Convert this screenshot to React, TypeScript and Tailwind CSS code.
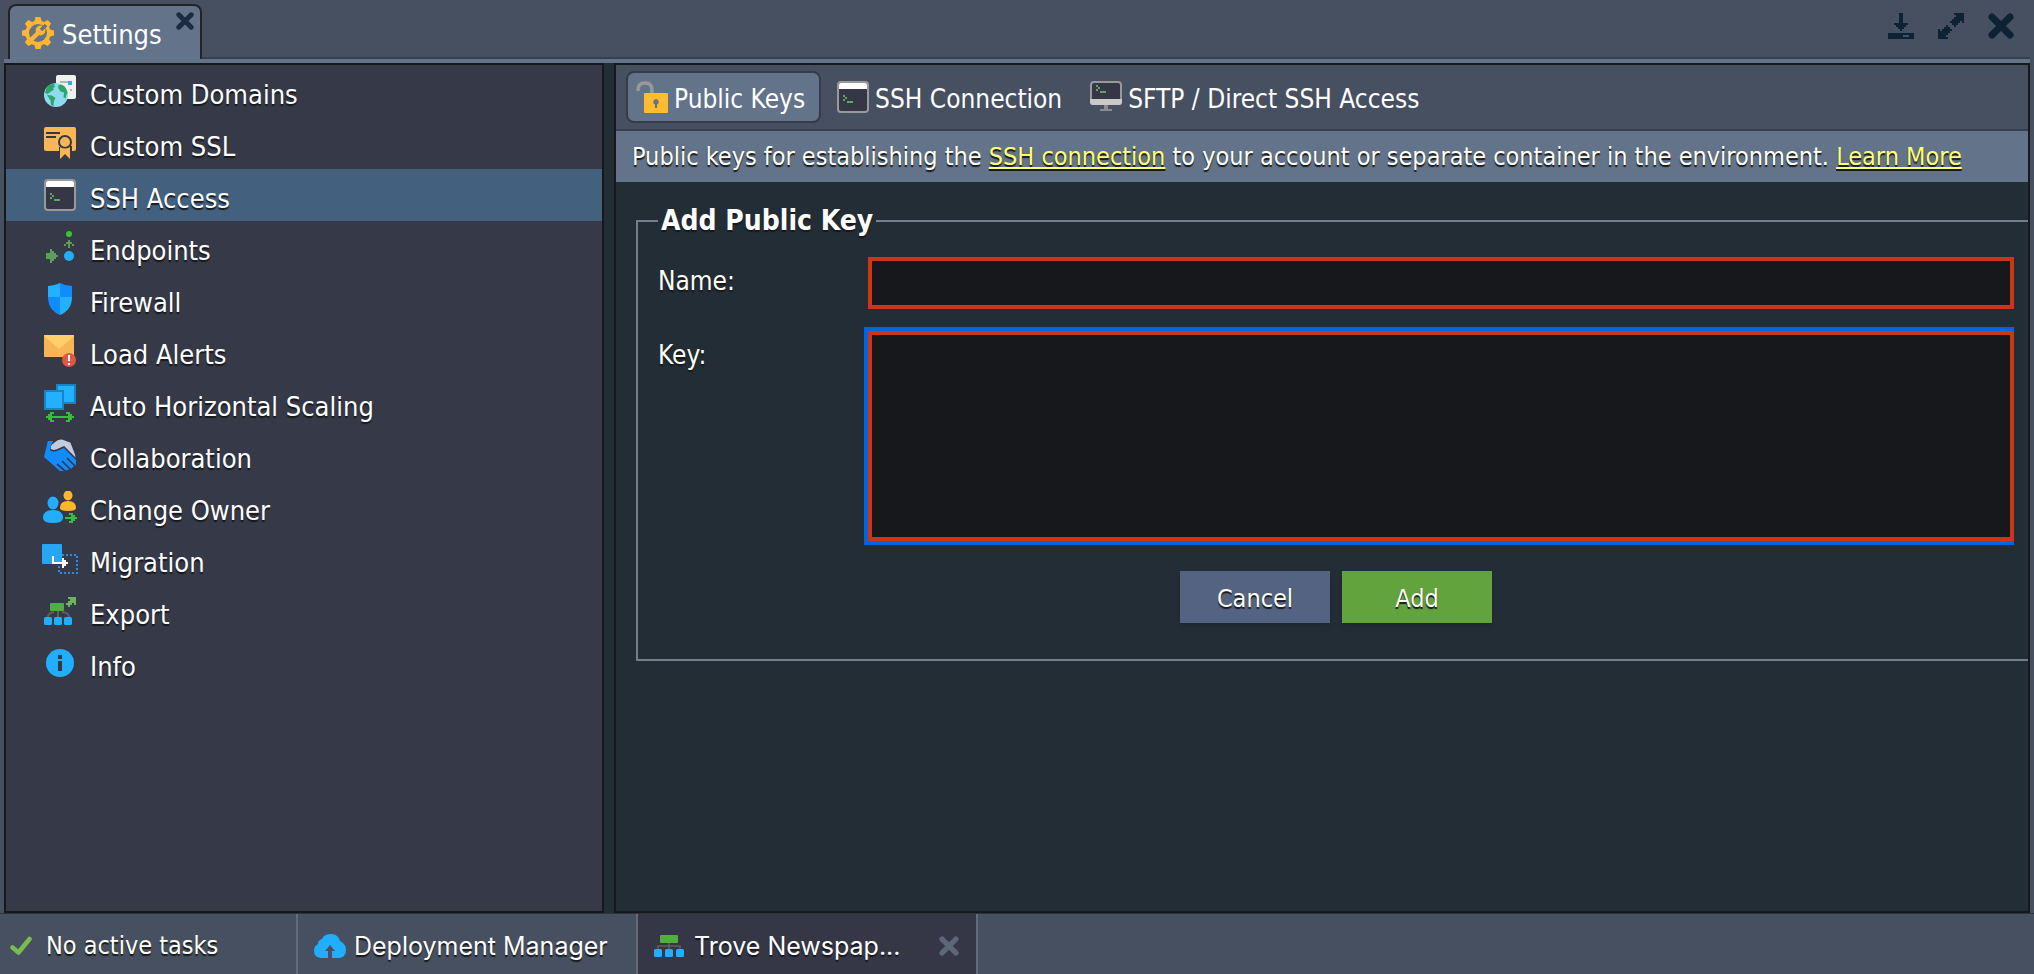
import React from "react";

type IconProps = { className?: string };

const ink = "#353746";

function GearIcon() {
  return (
    <svg viewBox="0 0 32 32" className="h-8 w-8 shrink-0" aria-hidden="true">
      <g fill="#ffb62e">
        {[0, 45, 90, 135, 180, 225, 270, 315].map((a) => (
          <path key={a} d="M13.5 0h5l1.6 6h-8.2z" transform={`rotate(${a} 16 16)`} />
        ))}
        <circle cx="16" cy="16" r="12.6" />
      </g>
      <circle cx="16" cy="16" r="9" fill="#62738a" />
      <path d="M8 24l9-9" stroke="#ffb62e" strokeWidth="4.500" />
      <circle cx="18.500" cy="13.500" r="4.900" fill="#ffb62e" />
      <path d="M19 13l5-5" stroke="#62738a" strokeWidth="3.500" />
    </svg>
  );
}

function DomainsIcon() {
  return (
    <svg viewBox="0 0 32 32" className="h-8 w-8" aria-hidden="true">
      <rect x="12" width="20" height="24" rx="2" fill="#f0f0ee" />
      <path d="M16 6h8v2h-8z" fill="#b5b5b5" />
      <path d="M24 6h4v4h-4z" fill="#25b7e0" />
      <path d="M26 14h2v2h-2z" fill="#b5b5b5" />
      <circle cx="12" cy="20" r="12" fill="#8cdcee" />
      <path d="M2.500 13c2-3 5-4.500 8.500-4.500l-1 2 1.500 1-2.500 1.500 1 1.500-3 2-2 1.500-1.500 1-2.500-1zM14 10.500c3-1.500 6-.5 8 3l1.500 4-1 2-1 4-2-1.500.5-4.500-3.500-1-2-3zM3 20l5 .5 3.500 2.500-1.500 3-.5 5-2.500-1-.5-4.500z" fill="#2da567" />
    </svg>
  );
}

function SslIcon() {
  return (
    <svg viewBox="0 0 32 32" className="h-8 w-8" aria-hidden="true">
      <path d="M2 0h28q2 0 2 2v20q0 2-2 2h-2v-4H16v4H2q-2 0-2-2V2Q0 0 2 0z" fill="#f9b655" />
      <path d="M2 5h14v2H2zM2 9h10v2H2z" fill={ink} />
      <circle cx="21" cy="15" r="6" fill="#f9b655" stroke={ink} strokeWidth="2" />
      <path d="M15 20h2v4h-2z" fill={ink} />
      <path d="M16 20q5 3 10 0v12l-5-5-5 5z" fill="#f9b655" />
      <path d="M27 19v5" stroke={ink} strokeWidth="2" />
    </svg>
  );
}

function TerminalIcon({ className = "h-8 w-8" }: IconProps) {
  return (
    <svg viewBox="0 0 32 32" className={className} aria-hidden="true">
      <rect x="1" y="1" width="30" height="30" rx="3" fill={ink} stroke="#999" strokeWidth="2" />
      <path d="M2 4q0-2 2-2h24q2 0 2 2v4H2z" fill="#fff" />
      <path d="M6 14h2v2H6zM8 16h2v2H8zM6 18h2v2H6zM10 20h6v2h-6z" fill="#5aa861" />
    </svg>
  );
}

function EndpointsIcon() {
  return (
    <svg viewBox="0 0 32 32" className="h-8 w-8" aria-hidden="true">
      <circle cx="25" cy="3" r="3" fill="#3ec42f" />
      <path d="M24 9h2v2h2v2h2v2h-2v-2h-2v4h-2v-4h-2v2h-2v-2h2v-2h2z" fill="#5c9e5a" />
      <circle cx="25" cy="25" r="5" fill="#22aeff" />
      <path d="M2 22h4v-4h2v2h2v2h2v2h2v2h-2v2h-2v2H8v2H6v-4H2z" fill="#5c9e5a" />
    </svg>
  );
}

function FirewallIcon() {
  return (
    <svg viewBox="0 0 32 32" className="h-8 w-8" aria-hidden="true">
      <path d="M16 0Q10 3 4 3v11h12z" fill="#22b0ff" />
      <path d="M16 0q6 3 12 3v11H16z" fill="#118cff" />
      <path d="M4 14h12v18Q4 27 4 14z" fill="#118cff" />
      <path d="M16 14h12q0 13-12 18z" fill="#22b0ff" />
    </svg>
  );
}

function AlertsIcon() {
  return (
    <svg viewBox="0 0 32 32" className="h-8 w-8" aria-hidden="true">
      <rect width="30" height="22" rx="1" fill="#f7b556" />
      <path d="M0 1q0-1 1-1h28q1 0 1 1L15 14z" fill="#ffd068" />
      <circle cx="25" cy="25" r="7" fill="#e05648" />
      <path d="M24 20h2v6h-2zM24 28h2v2h-2z" fill="#fff" />
    </svg>
  );
}

function ScalingIcon() {
  return (
    <svg viewBox="0 0 32 38" className="h-[38px] w-8" aria-hidden="true">
      <rect x="13" y="1" width="18" height="18" fill="#22b0ff" stroke="#1584c4" strokeWidth="2" />
      <rect x="1" y="7" width="18" height="18" fill="#22b0ff" stroke="#1584c4" strokeWidth="2" />
      <path d="M2 32h2v-2h2v-2h4v2H8v2h16v-2h-2v-2h4v2h2v2h2v2h-2v2h-2v2h-4v-2h2v-2H8v2h2v2H6v-2H4v-2H2z" fill="#35bf3b" />
    </svg>
  );
}

function HandshakeIcon() {
  return (
    <svg viewBox="0 0 32 32" className="h-8 w-8" aria-hidden="true">
      <path d="M4 2h5l3 7 8-2 8 8 4 5v4q0 4-3 4-1 2-4 2-1 2-4 1-2 2-5 1L0 18z" fill="#118cff" />
      <path d="M23 19l8 8M18 22l8 8M13 25l8 7" stroke={ink} strokeWidth="1.700" />
      <path d="M30 27l-2.500 3-4 1.500-4 .8V34h14v-7z" fill={ink} opacity="0.6" />
      <path d="M6 10q-1-4 4-7 4-4 9-3l8 3 5 13v4L20 8l-7 3q-5 2-7-1z" fill="#c5cbdf" stroke={ink} strokeWidth="1.500" />
      <path d="M4 2h5L6.500 8 6 12l-4 3z" fill="#118cff" />
    </svg>
  );
}

function OwnerIcon() {
  return (
    <svg viewBox="0 0 34 32" className="h-8 w-[34px]" aria-hidden="true">
      <ellipse cx="25" cy="4.500" rx="4.500" ry="5" fill="#ffb52e" />
      <path d="M17 17q0-7 8-7t8 7q0 3-8 3t-8-3z" fill="#ffb52e" />
      <ellipse cx="10" cy="12" rx="5.500" ry="6.500" fill="#22aeff" />
      <path d="M0 27q0-8 10-8t10 8q0 5-10 5T0 27z" fill="#22aeff" />
      <path d="M22 26h6v-2h-2v-2h4v2h2v2h2v2h-2v2h-2v2h-4v-2h2v-2h-6z" fill="#35bf3b" />
    </svg>
  );
}

function MigrationIcon() {
  return (
    <svg viewBox="0 0 36 30" className="h-[30px] w-9" aria-hidden="true">
      <rect width="20" height="20" rx="1" fill="#26a6f5" />
      <path d="M20 11h15v18H17v-9" fill="none" stroke="#2790d6" strokeWidth="2" strokeDasharray="2 2" />
      <path d="M10 12h2v6h8v-4h2v2h2v2h2v2h-2v2h-2v2h-2v-4H10z" fill="#fff" />
    </svg>
  );
}

function ExportIcon() {
  return (
    <svg viewBox="0 0 32 28" className="h-7 w-8" aria-hidden="true">
      <path d="M24 0h8v8h-2V6h-2v2h-2v2h-2V8h-2V6h2V4h2V2h-2z" fill="#6cb35f" />
      <rect x="6" y="6" width="14" height="8" rx="1" fill="#4fb03f" />
      <path d="M14 14v6M10 15q-6 1-6 5M18 15q7 1 7 5" stroke="#5c5f6b" strokeWidth="2" fill="none" />
      <g fill="#22aeff">
        <rect y="20" width="8" height="8" rx="1.500" />
        <rect x="10" y="20" width="8" height="8" rx="1.500" />
        <rect x="20" y="20" width="8" height="8" rx="1.500" />
      </g>
    </svg>
  );
}

function InfoIcon() {
  return (
    <svg viewBox="0 0 28 28" className="h-7 w-7" aria-hidden="true">
      <circle cx="14" cy="14" r="14" fill="#22aeff" />
      <path d="M12 6h4v4h-4zM12 12h4v10h-4z" fill={ink} />
    </svg>
  );
}

function LockIcon() {
  return (
    <svg viewBox="0 0 32 32" className="h-8 w-8 shrink-0" aria-hidden="true">
      <path d="M2 10V9q0-7 7-7t7 7v4" fill="none" stroke="#999" strokeWidth="3.500" />
      <rect x="8" y="12" width="24" height="20" rx="1" fill="#ffbc2e" />
      <circle cx="20" cy="21" r="2.700" fill="#62738a" />
      <path d="M19 22h2v5h-2z" fill="#62738a" />
    </svg>
  );
}

function MonitorIcon() {
  return (
    <svg viewBox="0 0 32 32" className="h-8 w-8 shrink-0" aria-hidden="true">
      <path d="M14 23h4v5h4v2H10v-2h4z" fill="#8c8c8c" />
      <rect x="1" y="1" width="30" height="22" rx="3" fill={ink} stroke="#999" strokeWidth="2" />
      <path d="M0 18h32v3q0 3-3 3H3q-3 0-3-3z" fill="#c9c9c9" />
      <path d="M6 4h2v2H6zM8 6h2v2H8zM6 8h2v2H6zM10 10h6v2h-6z" fill="#5aa861" />
    </svg>
  );
}

function CrossIcon({ className }: IconProps) {
  return (
    <svg viewBox="0 0 26 26" className={className} aria-hidden="true">
      <path d="M4 4l18 18M22 4L4 22" stroke="currentColor" strokeWidth="7" strokeLinecap="round" />
    </svg>
  );
}

function MinimizeIcon() {
  return (
    <svg viewBox="0 0 26 26" className="h-[26px] w-[26px]" aria-hidden="true">
      <path d="M11 0h4v10h5v2h-2v2h-2v2h-2v2h-2v-2h-2v-2H8v-2H6v-2h5zM0 20h26v6H0zM15 22v2h6v-2z" fill="currentColor" fillRule="evenodd" />
    </svg>
  );
}

function MaximizeIcon() {
  return (
    <svg viewBox="0 0 26 26" className="h-[26px] w-[26px]" aria-hidden="true">
      <path d="M16 0h10v10h-2V8h-2v2h-2v2h-2v2h-2v-2h-2v-2h-2V8h2V6h2V4h2V2h-2z" fill="currentColor" />
      <path d="M10 26H0V16h2v2h2v-2h2v-2h2v-2h2v2h2v2h2v2h-2v2h-2v2H8v2h2z" fill="currentColor" />
    </svg>
  );
}

function TopologyIcon() {
  return (
    <svg viewBox="0 0 30 22" className="h-[22px] w-[30px] shrink-0" aria-hidden="true">
      <rect x="6" width="18" height="8" rx="1" fill="#4fb03f" />
      <path d="M15 8v6M4 14v-3h22v3" stroke="#5c5f6b" strokeWidth="1.500" fill="none" />
      <g fill="#22aeff">
        <rect y="14" width="8" height="8" rx="1.500" />
        <rect x="11" y="14" width="8" height="8" rx="1.500" />
        <rect x="22" y="14" width="8" height="8" rx="1.500" />
      </g>
    </svg>
  );
}

function CloudIcon() {
  return (
    <svg viewBox="0 0 32 24" className="h-6 w-8 shrink-0" aria-hidden="true">
      <path d="M7 24q-7-1-7-7 0-5 4-7 0-4 4-5Q10 0 17 0q7 0 9 7 6 3 6 9 0 7-7 8z" fill="#22aeff" />
      <path d="M16 11l5 6h-3v7h-4v-7h-3z" fill="#475060" />
    </svg>
  );
}

function CheckIcon() {
  return (
    <svg viewBox="0 0 22 20" className="h-5 w-[22px] shrink-0" aria-hidden="true">
      <path d="M2.500 11.500l6 5L19.500 3" fill="none" stroke="#79bd50" strokeWidth="4.500" strokeLinecap="round" strokeLinejoin="round" />
    </svg>
  );
}

const menu = [
  { label: "Custom Domains", icon: <DomainsIcon /> },
  { label: "Custom SSL", icon: <SslIcon /> },
  { label: "SSH Access", icon: <TerminalIcon /> },
  { label: "Endpoints", icon: <EndpointsIcon /> },
  { label: "Firewall", icon: <FirewallIcon /> },
  { label: "Load Alerts", icon: <AlertsIcon /> },
  { label: "Auto Horizontal Scaling", icon: <ScalingIcon /> },
  { label: "Collaboration", icon: <HandshakeIcon /> },
  { label: "Change Owner", icon: <OwnerIcon /> },
  { label: "Migration", icon: <MigrationIcon /> },
  { label: "Export", icon: <ExportIcon /> },
  { label: "Info", icon: <InfoIcon /> },
];

const shadow = "[text-shadow:0_2px_1px_#17181c]";

export default function App() {
  return (
    <div className="flex min-h-screen flex-col bg-[#475060] font-['DejaVu_Sans_Condensed','Noto_Sans',sans-serif] text-[26px] leading-8 text-white">
      <header className="mx-1 flex items-end border-b-4 border-[#62738a]">
        <div className="ml-1 flex h-[55px] w-[194px] items-start rounded-t-lg border-2 border-b-0 border-[#222428] bg-[#62738a] pt-[11px] pl-3">
          <GearIcon />
          <span className="ml-2 flex-1 pt-0.5 text-[27px]">Settings</span>
          <button aria-label="Close Settings" className="-mt-[5px] mr-1.5 text-[#1b2c3f]">
            <CrossIcon className="h-[18px] w-[18px]" />
          </button>
        </div>
        <div className="flex h-[59px] flex-1 items-start justify-end gap-6 border-b-2 border-[#363f4f] pt-[13px] pr-4 text-[#0e2236]">
          <button aria-label="Minimize"><MinimizeIcon /></button>
          <button aria-label="Maximize"><MaximizeIcon /></button>
          <button aria-label="Close"><CrossIcon className="h-[26px] w-[26px]" /></button>
        </div>
      </header>

      <main className="mx-1 flex flex-1 gap-2.5 bg-[#232d36]">
        <nav className="w-[600px] shrink-0 border-2 border-[#17181c] bg-[#363947]">
          <ul>
            {menu.map(({ label, icon }) => (
              <li key={label}>
                <a
                  href="#"
                  className={`flex h-[52px] items-center pl-9 text-[27px] ${shadow} ${label === "SSH Access" ? "bg-[#43617e]" : ""}`}
                >
                  <span className="flex w-9 justify-center">{icon}</span>
                  <span className="ml-3 pt-2">{label}</span>
                </a>
              </li>
            ))}
          </ul>
        </nav>

        <section className="min-w-0 flex-1 border-2 border-[#17181c]">
          <div className="flex h-[66px] items-center gap-2 border-b-2 border-[#363f4f] bg-[#475060] pl-2.5">
            <button className="flex h-[52px] items-center gap-1.5 rounded-lg border-2 border-[#363b46] bg-[#62738a] pr-3.5 pl-2">
              <LockIcon />
              <span className="pt-1">Public Keys</span>
            </button>
            <button className="flex h-[52px] items-center gap-1.5 pr-3 pl-2">
              <TerminalIcon className="h-8 w-8 shrink-0" />
              <span className="pt-1">SSH Connection</span>
            </button>
            <button className="flex h-[52px] items-center gap-1.5 px-2">
              <MonitorIcon />
              <span className="pt-1">SFTP / Direct SSH Access</span>
            </button>
          </div>
          <p className={`bg-[#62738a] px-4 pt-2.5 pb-[9px] text-[25px] whitespace-nowrap text-[#fffff4] ${shadow}`}>
            Public keys for establishing the{" "}
            <a href="#" className="text-[#ffff73] underline decoration-2 underline-offset-2">SSH connection</a>{" "}
            to your account or separate container in the environment.{" "}
            <a href="#" className="text-[#ffff73] underline decoration-2 underline-offset-2">Learn More</a>
          </p>
          <fieldset className="mt-[23px] ml-5 border-2 border-r-0 border-[#747e8d] pr-3.5 pb-9 pl-5 text-[#fffff4]">
            <legend className={`px-[3px] text-[28px] font-bold text-white ${shadow}`}>Add Public Key</legend>
            <div className="mt-5 flex items-start">
              <label htmlFor="key-name" className={`w-[210px] pt-2 ${shadow}`}>Name:</label>
              <input id="key-name" type="text" className="h-[52px] min-w-0 flex-1 border-4 border-[#cb3615] bg-[#17181c] px-2 outline-none" />
            </div>
            <div className="mt-[18px] flex items-start">
              <label htmlFor="key-value" className={`w-[206px] pt-3 ${shadow}`}>Key:</label>
              <div className="flex min-w-0 flex-1 overflow-hidden py-1 pl-1">
                <textarea id="key-value" className="h-[210px] w-full resize-none border-4 border-[#cb3615] bg-[#17181c] px-2 outline-4 outline-[#0065e0]" />
              </div>
            </div>
            <div className="mt-[26px] flex justify-center gap-3 text-[25px]">
              <button type="button" className={`h-[52px] w-[150px] bg-[#546381] pt-1 shadow-md ${shadow}`}>Cancel</button>
              <button type="button" className={`h-[52px] w-[150px] bg-[#62a33d] pt-1 shadow-md ${shadow}`}>Add</button>
            </div>
          </fieldset>
        </section>
      </main>

      <footer className="flex h-[61px] border-t border-[#2b3440] text-[25px]">
        <div className={`flex w-[298px] items-center gap-3.5 border-r-2 border-[#636a7a] pt-1 pl-2.5 text-[#fffff4] ${shadow}`}>
          <CheckIcon />
          <span>No active tasks</span>
        </div>
        <button className={`flex w-[340px] items-center gap-2 border-r-2 border-[#636a7a] pt-1 pl-4 font-['Inter',sans-serif] ${shadow}`}>
          <CloudIcon />
          <span>Deployment Manager</span>
        </button>
        <div className={`flex w-[340px] items-center gap-2.5 border-r-2 border-[#636a7a] bg-[#353746] pt-1 pl-4 font-['Inter',sans-serif] ${shadow}`}>
          <TopologyIcon />
          <span className="flex-1">Trove Newspap...</span>
          <button aria-label="Close tab" className="mr-[17px] text-[#5c6779]">
            <CrossIcon className="h-5 w-5" />
          </button>
        </div>
      </footer>
    </div>
  );
}
